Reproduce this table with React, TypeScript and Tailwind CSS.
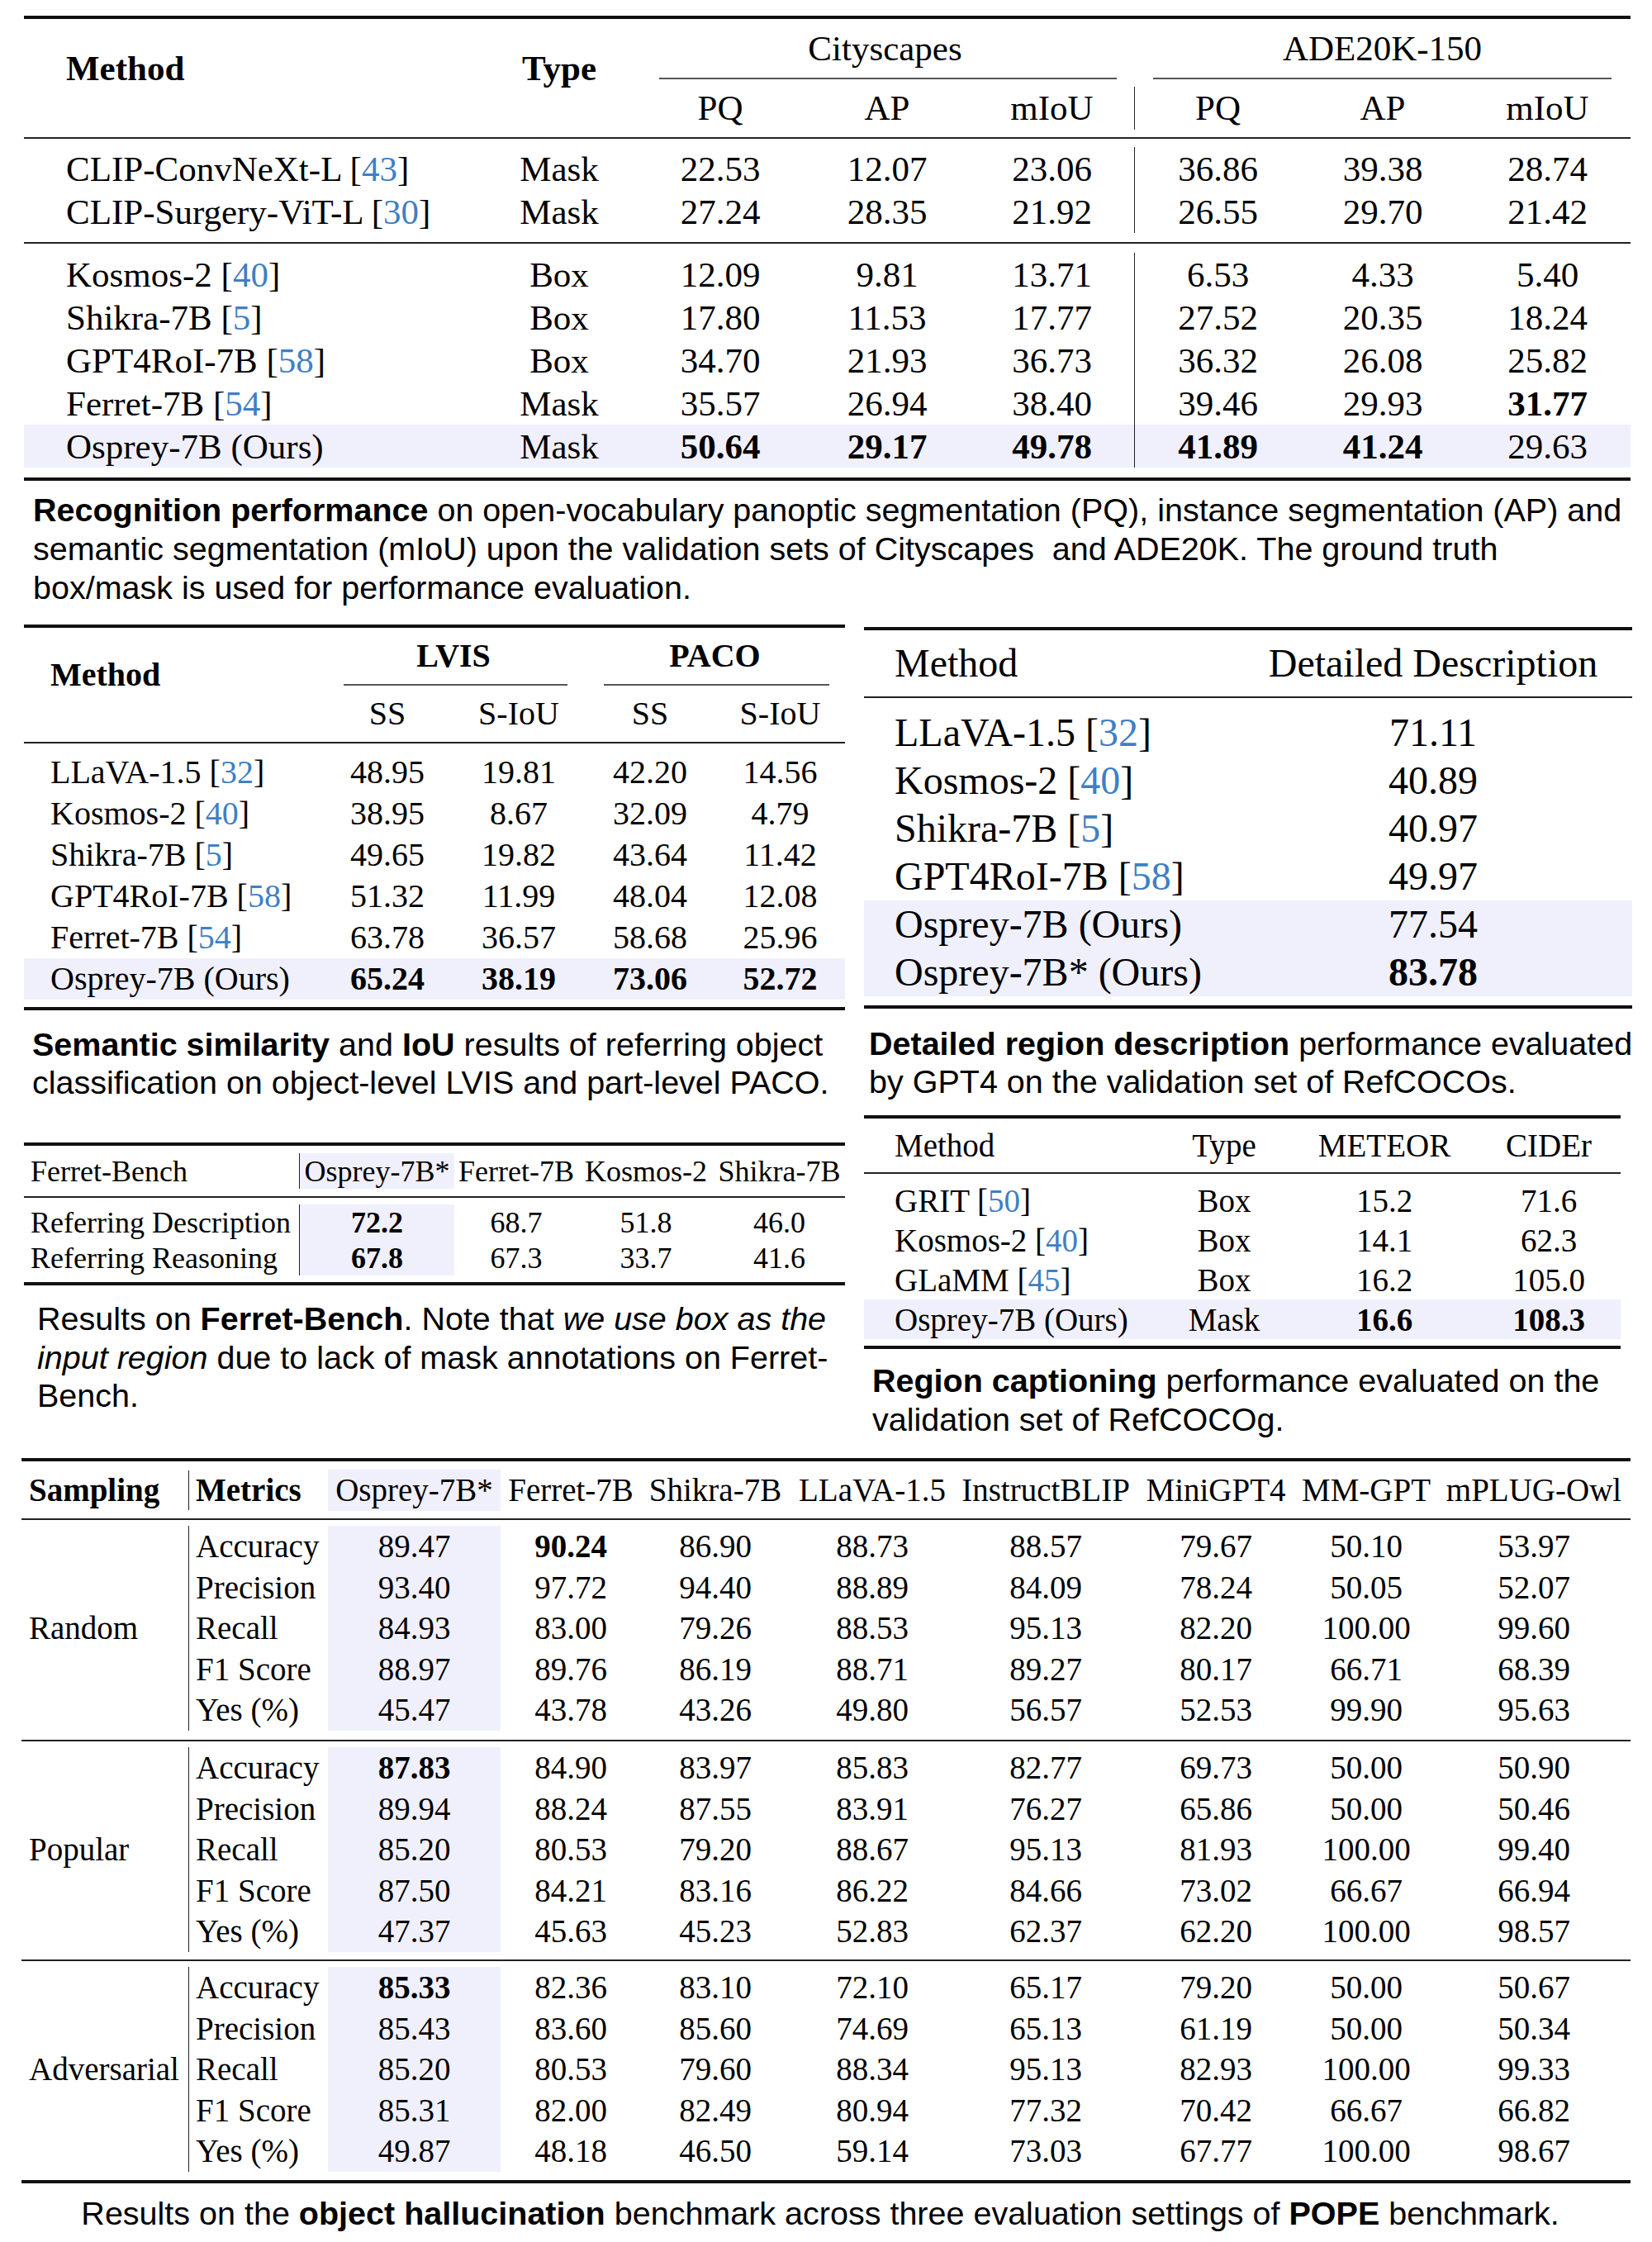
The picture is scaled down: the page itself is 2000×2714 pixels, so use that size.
import React from "react";

const HL = "bg-[#f0f0fd]";

const Cite = ({ n }: { n: string }) => (
  <>
    {" "}[<span className="text-[#3f7fc4]">{n}</span>]
  </>
);

// "!" prefix = bold value
const V = ({ s }: { s: string }) =>
  s.startsWith("!") ? <span className="font-bold">{s.slice(1)}</span> : <>{s}</>;

const Rule = ({ thick }: { thick?: boolean }) => (
  <div className={thick ? "h-[4px] bg-[#111]" : "h-[2px] bg-[#222]"} />
);

const CMid = ({ className }: { className: string }) => (
  <div className={`h-[1.5px] bg-[#555] ${className}`} />
);

const Caption = ({ className = "", children }: { className?: string; children: React.ReactNode }) => (
  <div
    className={`font-['Liberation_Sans',Arial,sans-serif] text-[39.5px] whitespace-nowrap text-black ${className}`}
  >
    {children}
  </div>
);

type Row = { name: string; cite?: string; type?: string; v: string[]; hl?: boolean };

/* ---------- Table 1: recognition ---------- */

const t1a: Row[] = [
  { name: "CLIP-ConvNeXt-L", cite: "43", type: "Mask", v: ["22.53", "12.07", "23.06", "36.86", "39.38", "28.74"] },
  { name: "CLIP-Surgery-ViT-L", cite: "30", type: "Mask", v: ["27.24", "28.35", "21.92", "26.55", "29.70", "21.42"] },
];

const t1b: Row[] = [
  { name: "Kosmos-2", cite: "40", type: "Box", v: ["12.09", "9.81", "13.71", "6.53", "4.33", "5.40"] },
  { name: "Shikra-7B", cite: "5", type: "Box", v: ["17.80", "11.53", "17.77", "27.52", "20.35", "18.24"] },
  { name: "GPT4RoI-7B", cite: "58", type: "Box", v: ["34.70", "21.93", "36.73", "36.32", "26.08", "25.82"] },
  { name: "Ferret-7B", cite: "54", type: "Mask", v: ["35.57", "26.94", "38.40", "39.46", "29.93", "!31.77"] },
  { name: "Osprey-7B (Ours)", type: "Mask", v: ["!50.64", "!29.17", "!49.78", "!41.89", "!41.24", "29.63"], hl: true },
];

const T1_COLS = [
  "w-[204px]",
  "w-[200px]",
  "w-[199px]",
  "w-[202px] border-l-[1.5px] border-[#222]",
  "w-[198px]",
  "w-[201px]",
];

const T1Row = ({ r }: { r: Row }) => (
  <div className={`flex h-[52px] ${r.hl ? HL : ""}`}>
    <div className="flex w-[555px] items-center pl-[51px]">
      {r.name}
      {r.cite && <Cite n={r.cite} />}
    </div>
    <div className="flex w-[186px] items-center justify-center">{r.type}</div>
    {r.v.map((s, i) => (
      <div key={i} className={`flex items-center justify-center ${T1_COLS[i]}`}>
        <V s={s} />
      </div>
    ))}
  </div>
);

const Table1 = () => (
  <div className="ml-[29px] w-[1945px] text-[43px] leading-none">
    <Rule thick />
    <div className="flex h-[143px]">
      <div className="flex w-[555px] items-center pb-[24px] pl-[51px] font-bold">Method</div>
      <div className="flex w-[186px] items-center justify-center pb-[24px] font-bold">Type</div>
      <div className="flex w-[603px] flex-col">
        <div className="flex h-[71px] items-center justify-center">Cityscapes</div>
        <CMid className="ml-[28px] mr-[21px]" />
        <div className="flex h-[70.5px] items-center">
          <div className="w-[204px] text-center">PQ</div>
          <div className="w-[200px] text-center">AP</div>
          <div className="w-[199px] text-center">mIoU</div>
        </div>
      </div>
      <div className="flex w-[601px] flex-col">
        <div className="flex h-[71px] items-center justify-center">ADE20K-150</div>
        <CMid className="ml-[23px] mr-[23px]" />
        <div className="flex h-[70.5px] items-center">
          <div className="flex h-[52px] w-[202px] items-center justify-center border-l-[1.5px] border-[#222]">PQ</div>
          <div className="w-[198px] text-center">AP</div>
          <div className="w-[201px] text-center">mIoU</div>
        </div>
      </div>
    </div>
    <Rule />
    <div className="pt-[10px] pb-[11px]">
      {t1a.map((r) => (
        <T1Row key={r.name} r={r} />
      ))}
    </div>
    <Rule />
    <div className="pt-[11px] pb-[12px]">
      {t1b.map((r) => (
        <T1Row key={r.name} r={r} />
      ))}
    </div>
    <Rule thick />
  </div>
);

/* ---------- Table 2: LVIS / PACO ---------- */

const t2: Row[] = [
  { name: "LLaVA-1.5", cite: "32", v: ["48.95", "19.81", "42.20", "14.56"] },
  { name: "Kosmos-2", cite: "40", v: ["38.95", "8.67", "32.09", "4.79"] },
  { name: "Shikra-7B", cite: "5", v: ["49.65", "19.82", "43.64", "11.42"] },
  { name: "GPT4RoI-7B", cite: "58", v: ["51.32", "11.99", "48.04", "12.08"] },
  { name: "Ferret-7B", cite: "54", v: ["63.78", "36.57", "58.68", "25.96"] },
  { name: "Osprey-7B (Ours)", v: ["!65.24", "!38.19", "!73.06", "!52.72"], hl: true },
];
const T2_COLS = ["w-[158px]", "w-[160px]", "w-[158px]", "w-[157px]"];

const Table2 = () => (
  <div className="w-[994px] text-[40px] leading-none">
    <Rule thick />
    <div className="flex h-[138px]">
      <div className="flex w-[361px] items-center pb-[24px] pl-[32px] font-bold">Method</div>
      <div className="flex w-[318px] flex-col">
        <div className="flex h-[68px] items-center justify-center font-bold">LVIS</div>
        <CMid className="ml-[26px] mr-[21px]" />
        <div className="flex h-[68.5px] items-center">
          <div className="w-[158px] text-center">SS</div>
          <div className="w-[160px] text-center">S-IoU</div>
        </div>
      </div>
      <div className="flex w-[315px] flex-col">
        <div className="flex h-[68px] items-center justify-center font-bold">PACO</div>
        <CMid className="ml-[23px] mr-[19px]" />
        <div className="flex h-[68.5px] items-center">
          <div className="w-[158px] text-center">SS</div>
          <div className="w-[157px] text-center">S-IoU</div>
        </div>
      </div>
    </div>
    <Rule />
    <div className="pt-[10px] pb-[9px]">
      {t2.map((r) => (
        <div key={r.name} className={`flex h-[50px] items-center ${r.hl ? HL : ""}`}>
          <div className="w-[361px] pl-[32px]">
            {r.name}
            {r.cite && <Cite n={r.cite} />}
          </div>
          {r.v.map((s, i) => (
            <div key={i} className={`text-center ${T2_COLS[i]}`}>
              <V s={s} />
            </div>
          ))}
        </div>
      ))}
    </div>
    <Rule thick />
  </div>
);

/* ---------- Table 3: detailed description ---------- */

const t3: Row[] = [
  { name: "LLaVA-1.5", cite: "32", v: ["71.11"] },
  { name: "Kosmos-2", cite: "40", v: ["40.89"] },
  { name: "Shikra-7B", cite: "5", v: ["40.97"] },
  { name: "GPT4RoI-7B", cite: "58", v: ["49.97"] },
  { name: "Osprey-7B (Ours)", v: ["77.54"], hl: true },
  { name: "Osprey-7B* (Ours)", v: ["!83.78"], hl: true },
];

const Table3 = () => (
  <div className="w-[930px] text-[48px] leading-none">
    <Rule thick />
    <div className="flex h-[80px] items-center">
      <div className="w-[485px] pl-[37px]">Method</div>
      <div className="w-[408px] text-center">Detailed Description</div>
    </div>
    <Rule />
    <div className="pt-[13px] pb-[11px]">
      {t3.map((r) => (
        <div key={r.name} className={`flex h-[58px] items-center ${r.hl ? HL : ""}`}>
          <div className="w-[485px] pl-[37px]">
            {r.name}
            {r.cite && <Cite n={r.cite} />}
          </div>
          <div className="w-[408px] text-center">
            <V s={r.v[0]} />
          </div>
        </div>
      ))}
    </div>
    <Rule thick />
  </div>
);

/* ---------- Table 4: Ferret-Bench ---------- */

const T4_COLS = ["w-[188px]", "w-[150px]", "w-[164px]", "w-[159px]"];
const t4 = [
  { name: "Referring Description", v: ["!72.2", "68.7", "51.8", "46.0"] },
  { name: "Referring Reasoning", v: ["!67.8", "67.3", "33.7", "41.6"] },
];

const Table4 = () => (
  <div className="w-[994px] text-[36px] leading-none">
    <Rule thick />
    <div className="flex h-[61px] items-center">
      <div className="w-[333px] pl-[8px]">Ferret-Bench</div>
      <div className={`flex h-[43px] w-[188px] items-center justify-center border-l-[1.5px] border-[#222] ${HL}`}>
        Osprey-7B*
      </div>
      <div className="w-[150px] text-center">Ferret-7B</div>
      <div className="w-[164px] text-center">Kosmos-2</div>
      <div className="w-[159px] text-center">Shikra-7B</div>
    </div>
    <Rule />
    <div className="flex pt-[8px] pb-[8px]">
      <div className="w-[333px] pl-[8px]">
        {t4.map((r) => (
          <div key={r.name} className="flex h-[43px] items-center">
            {r.name}
          </div>
        ))}
      </div>
      {T4_COLS.map((w, ci) => (
        <div key={ci} className={`${w} ${ci === 0 ? `border-l-[1.5px] border-[#222] ${HL}` : ""}`}>
          {t4.map((r) => (
            <div key={r.name} className="flex h-[43px] items-center justify-center">
              <V s={r.v[ci]} />
            </div>
          ))}
        </div>
      ))}
    </div>
    <Rule thick />
  </div>
);

/* ---------- Table 5: region captioning ---------- */

const t5: Row[] = [
  { name: "GRIT", cite: "50", type: "Box", v: ["15.2", "71.6"] },
  { name: "Kosmos-2", cite: "40", type: "Box", v: ["14.1", "62.3"] },
  { name: "GLaMM", cite: "45", type: "Box", v: ["16.2", "105.0"] },
  { name: "Osprey-7B (Ours)", type: "Mask", v: ["!16.6", "!108.3"], hl: true },
];

const Table5 = () => (
  <div className="w-[916px] text-[39px] leading-none">
    <Rule thick />
    <div className="flex h-[65px] items-center">
      <div className="w-[354px] pl-[37px]">Method</div>
      <div className="w-[164px] text-center">Type</div>
      <div className="w-[224px] text-center">METEOR</div>
      <div className="w-[174px] text-center">CIDEr</div>
    </div>
    <Rule />
    <div className="pt-[8px] pb-[8px]">
      {t5.map((r) => (
        <div key={r.name} className={`flex h-[48px] items-center ${r.hl ? HL : ""}`}>
          <div className="w-[354px] pl-[37px]">
            {r.name}
            {r.cite && <Cite n={r.cite} />}
          </div>
          <div className="w-[164px] text-center">{r.type}</div>
          <div className="w-[224px] text-center">
            <V s={r.v[0]} />
          </div>
          <div className="w-[174px] text-center">
            <V s={r.v[1]} />
          </div>
        </div>
      ))}
    </div>
    <Rule thick />
  </div>
);

/* ---------- Table 6: POPE ---------- */

const P_COLS = ["w-[209px]", "w-[170px]", "w-[180px]", "w-[200px]", "w-[220px]", "w-[192px]", "w-[172px]", "w-[234px]"];
const P_HEAD = ["Osprey-7B*", "Ferret-7B", "Shikra-7B", "LLaVA-1.5", "InstructBLIP", "MiniGPT4", "MM-GPT", "mPLUG-Owl"];
const METRICS = ["Accuracy", "Precision", "Recall", "F1 Score", "Yes (%)"];

const pope = [
  {
    label: "Random",
    pad: "pt-[7px] pb-[11.5px]",
    rows: [
      ["89.47", "!90.24", "86.90", "88.73", "88.57", "79.67", "50.10", "53.97"],
      ["93.40", "97.72", "94.40", "88.89", "84.09", "78.24", "50.05", "52.07"],
      ["84.93", "83.00", "79.26", "88.53", "95.13", "82.20", "100.00", "99.60"],
      ["88.97", "89.76", "86.19", "88.71", "89.27", "80.17", "66.71", "68.39"],
      ["45.47", "43.78", "43.26", "49.80", "56.57", "52.53", "99.90", "95.63"],
    ],
  },
  {
    label: "Popular",
    pad: "pt-[7px] pb-[9.5px]",
    rows: [
      ["!87.83", "84.90", "83.97", "85.83", "82.77", "69.73", "50.00", "50.90"],
      ["89.94", "88.24", "87.55", "83.91", "76.27", "65.86", "50.00", "50.46"],
      ["85.20", "80.53", "79.20", "88.67", "95.13", "81.93", "100.00", "99.40"],
      ["87.50", "84.21", "83.16", "86.22", "84.66", "73.02", "66.67", "66.94"],
      ["47.37", "45.63", "45.23", "52.83", "62.37", "62.20", "100.00", "98.57"],
    ],
  },
  {
    label: "Adversarial",
    pad: "pt-[7px] pb-[10.5px]",
    rows: [
      ["!85.33", "82.36", "83.10", "72.10", "65.17", "79.20", "50.00", "50.67"],
      ["85.43", "83.60", "85.60", "74.69", "65.13", "61.19", "50.00", "50.34"],
      ["85.20", "80.53", "79.60", "88.34", "95.13", "82.93", "100.00", "99.33"],
      ["85.31", "82.00", "82.49", "80.94", "77.32", "70.42", "66.67", "66.82"],
      ["49.87", "48.18", "46.50", "59.14", "73.03", "67.77", "100.00", "98.67"],
    ],
  },
];

const PopeGroup = ({ label, rows, pad }: { label: string; rows: string[][]; pad: string }) => (
  <div className={`flex ${pad}`}>
    <div className="flex w-[202px] items-center pl-[9px]">{label}</div>
    <div className="w-[169px] border-l-[1.5px] border-[#222] pl-[8px]">
      {METRICS.map((m) => (
        <div key={m} className="flex h-[49.5px] items-center">
          {m}
        </div>
      ))}
    </div>
    {P_COLS.map((w, ci) => (
      <div key={ci} className={`${w} ${ci === 0 ? HL : ""}`}>
        {rows.map((r, ri) => (
          <div key={ri} className="flex h-[49.5px] items-center justify-center">
            <V s={r[ci]} />
          </div>
        ))}
      </div>
    ))}
  </div>
);

const Table6 = () => (
  <div className="ml-[26px] w-[1948px] text-[39px] leading-none">
    <Rule thick />
    <div className="flex h-[69px] items-center">
      <div className="w-[202px] pl-[9px] font-bold">Sampling</div>
      <div className="flex h-[48px] w-[169px] items-center border-l-[1.5px] border-[#222] pl-[8px] font-bold">
        Metrics
      </div>
      {P_HEAD.map((h, i) =>
        i === 0 ? (
          <div key={h} className={`flex h-[50px] items-center justify-center ${P_COLS[i]} ${HL}`}>
            {h}
          </div>
        ) : (
          <div key={h} className={`text-center ${P_COLS[i]}`}>
            {h}
          </div>
        )
      )}
    </div>
    {pope.map((g, gi) => (
      <React.Fragment key={g.label}>
        <Rule />
        <PopeGroup label={g.label} rows={g.rows} pad={g.pad} />
        {gi === pope.length - 1 && <Rule thick />}
      </React.Fragment>
    ))}
  </div>
);

export default function App() {
  return (
    <div className="h-[2714px] w-[2000px] overflow-hidden bg-white pt-[19px] font-['Liberation_Serif','Times_New_Roman',serif] text-black">
      <Table1 />
      <Caption className="ml-[40px] mt-[12px] leading-[47px]">
        <span className="font-bold">Recognition performance</span> on open-vocabulary panoptic segmentation (PQ),
        instance segmentation (AP) and
        <br />
        semantic segmentation (mIoU) upon the validation sets of Cityscapes&nbsp; and ADE20K. The ground truth
        <br />
        box/mask is used for performance evaluation.
      </Caption>

      <div className="flex h-[1030px]">
        <div className="ml-[29px] w-[994px] pt-[21px]">
          <Table2 />
          <Caption className="ml-[10px] mt-[18px] leading-[46px]">
            <span className="font-bold">Semantic similarity</span> and <span className="font-bold">IoU</span> results
            of referring object
            <br />
            classification on object-level LVIS and part-level PACO.
          </Caption>
          <div className="mt-[50px]">
            <Table4 />
          </div>
          <Caption className="ml-[16px] mt-[17px] leading-[46.5px]">
            Results on <span className="font-bold">Ferret-Bench</span>. Note that{" "}
            <span className="italic">we use box as the</span>
            <br />
            <span className="italic">input region</span> due to lack of mask annotations on Ferret-
            <br />
            Bench.
          </Caption>
        </div>

        <div className="ml-[23px] w-[930px] pt-[24px]">
          <Table3 />
          <Caption className="ml-[6px] mt-[19px] leading-[46px]">
            <span className="font-bold">Detailed region description</span> performance evaluated
            <br />
            by GPT4 on the validation set of RefCOCOs.
          </Caption>
          <div className="mt-[18px]">
            <Table5 />
          </div>
          <Caption className="ml-[10px] mt-[15px] leading-[47px]">
            <span className="font-bold">Region captioning</span> performance evaluated on the
            <br />
            validation set of RefCOCOg.
          </Caption>
        </div>
      </div>

      <Table6 />
      <Caption className="mt-[12.5px] pr-[14px] text-center leading-[47px]">
        Results on the <span className="font-bold">object hallucination</span> benchmark across three evaluation
        settings of <span className="font-bold">POPE</span> benchmark.
      </Caption>
    </div>
  );
}
